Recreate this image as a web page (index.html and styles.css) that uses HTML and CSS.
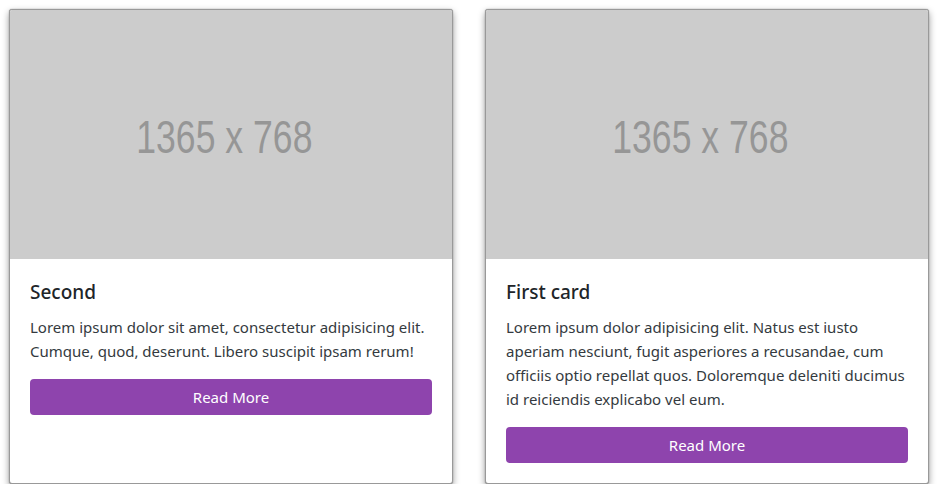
FILE: index.html
```html
<!DOCTYPE html>
<html lang="en">
<head>
  <meta charset="UTF-8">
  <title>Cards</title>
  <link rel="stylesheet" href="styles.css">
</head>
<body>

<div class="card-row">
  <!-- Second card -->
  <div class="card">
    <svg class="card-img" viewBox="0 0 1365 768" preserveAspectRatio="none">
      <rect width="1365" height="768" fill="#cccccc"/>
      <text x="390" y="440" font-family="Liberation Sans, Arial, sans-serif" font-size="142" fill="#969696" textLength="544" lengthAdjust="spacingAndGlyphs">1365 x 768</text>
    </svg>
    <div class="card-body">
      <h3 class="card-title">Second</h3>
      <p class="card-text">Lorem ipsum dolor sit amet, consectetur adipisicing elit. Cumque, quod, deserunt. Libero suscipit ipsam rerum!</p>
      <a href="#" class="btn">Read More</a>
    </div>
  </div>

  <!-- First card -->
  <div class="card">
    <svg class="card-img" viewBox="0 0 1365 768" preserveAspectRatio="none">
      <rect width="1365" height="768" fill="#cccccc"/>
      <text x="390" y="440" font-family="Liberation Sans, Arial, sans-serif" font-size="142" fill="#969696" textLength="544" lengthAdjust="spacingAndGlyphs">1365 x 768</text>
    </svg>
    <div class="card-body">
      <h3 class="card-title">First card</h3>
      <p class="card-text">Lorem ipsum dolor adipisicing elit. Natus est iusto aperiam nesciunt, fugit asperiores a recusandae, cum officiis optio repellat quos. Doloremque deleniti ducimus id reiciendis explicabo vel eum.</p>
      <a href="#" class="btn">Read More</a>
    </div>
  </div>
</div>

</body>
</html>
```

FILE: styles.css
```css
:root {
  --purple: #8e44ad;
  --text-color: #343a40;
  --title-color: #212529;
  --border-color: #999;
}

body {
  margin: 0;
  background: white;
  font-family: 'Noto Sans', 'Open Sans', sans-serif;
  color: var(--text-color);
}

.card-row {
  display: flex;
  gap: 32px;
  padding: 9px 11px 0 9px;
  align-items: stretch;
}

.card {
  flex: 0 0 444px;
  box-sizing: border-box;
  height: 475px;
  border: 1px solid var(--border-color);
  border-radius: 3px;
  box-shadow: 0 0 1px rgba(0, 0, 0, 0.5), 0 3px 7px rgba(0, 0, 0, 0.4);
  background: white;
  display: flex;
  flex-direction: column;
  overflow: hidden;
}

.card-img {
  display: block;
  width: 100%;
  height: 249px;
}

.card-body {
  padding: 21px 20px 20px;
}

.card-title {
  margin: 0 0 11px;
  font-size: 19px;
  font-weight: 500;
  line-height: 24px;
  color: var(--title-color);
}

.card-text {
  margin: 0 0 16px;
  font-size: 15px;
  line-height: 24px;
}

.btn {
  display: block;
  height: 36px;
  line-height: 36px;
  text-align: center;
  background-color: var(--purple);
  color: white;
  text-decoration: none;
  border-radius: 4px;
  font-size: 15px;
}
```
